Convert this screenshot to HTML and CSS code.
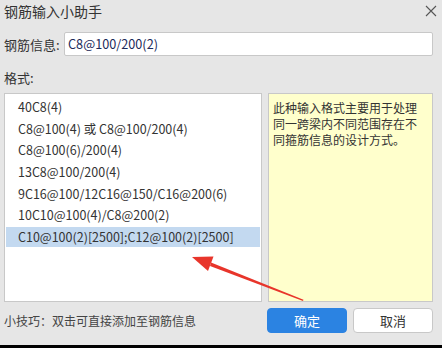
FILE: index.html
```html
<!DOCTYPE html>
<html lang="zh-CN">
<head>
<meta charset="UTF-8" />
<meta name="viewport" content="width=device-width, initial-scale=1" />
<title>钢筋输入小助手</title>
<link rel="stylesheet" href="styles.css">
</head>
<body>

<div class="dialog">
  <div class="title-bar">
    <span class="title">钢筋输入小助手</span>
    <svg class="close" width="12" height="12" viewBox="0 0 12 12">
      <path d="M1 1 L11 11 M11 1 L1 11" stroke="#555" stroke-width="1.1" fill="none" />
    </svg>
  </div>

  <div class="info-row">
    <label class="info-label">钢筋信息:</label>
    <div class="info-input">C8@100/200(2)</div>
  </div>

  <div class="format-label">格式:</div>

  <div class="main">
    <div class="format-list">
      <div class="item">40C8(4)</div>
      <div class="item">C8@100(4) 或 C8@100/200(4)</div>
      <div class="item">C8@100(6)/200(4)</div>
      <div class="item">13C8@100/200(4)</div>
      <div class="item">9C16@100/12C16@150/C16@200(6)</div>
      <div class="item">10C10@100(4)/C8@200(2)</div>
      <div class="item selected">C10@100(2)[2500];C12@100(2)[2500]</div>
    </div>
    <div class="desc">此种输入格式主要用于处理同一跨梁内不同范围存在不同箍筋信息的设计方式。</div>
  </div>

  <div class="footer">
    <div class="tip">小技巧：双击可直接添加至钢筋信息</div>
    <div class="buttons">
      <button class="btn primary">确定</button>
      <button class="btn">取消</button>
    </div>
  </div>

  <!-- 标注箭头 -->
  <svg class="arrow" width="442" height="345" viewBox="0 0 442 345">
    <polygon points="211,262.5 210,266 303,301 303.5,299.8" fill="#e8352b" />
    <polygon points="192,257 213.5,256.5 208,271" fill="#e8352b" />
  </svg>
</div>

</body>
</html>
```

FILE: styles.css
```css
* {
  box-sizing: border-box;
}
body {
  margin: 0;
  background: #000;
  font-family: "Noto Sans CJK SC", "Microsoft YaHei", sans-serif;
  color: #333;
}
.dialog {
  position: relative;
  width: 442px;
  height: 345px;
  background: #e6e6e6;
  padding: 0 9px 0 4px;
}
.title-bar {
  height: 22px;
  display: flex;
  align-items: center;
  justify-content: space-between;
}
.title {
  font-size: 14px;
  line-height: 22px;
  color: #333;
}
.close {
  margin-right: -4px;
  margin-top: -1px;
}
.info-row {
  margin-top: 10px;
  height: 24px;
  display: flex;
  align-items: center;
}
.info-label {
  width: 60px;
  font-size: 13px;
  color: #333;
}
.info-input {
  flex: 1;
  height: 24px;
  line-height: 22px;
  background: #fff;
  border: 1px solid #c8c8c8;
  border-radius: 2px;
  padding-left: 3px;
  font-size: 12.7px;
  color: #1c2a5a;
}
.format-label {
  margin-top: 14px;
  font-size: 13px;
  line-height: 16px;
  color: #333;
}
.main {
  margin-top: 7px;
  height: 209px;
  display: flex;
  gap: 6px;
}
.format-list {
  width: 258px;
  background: #fff;
  border: 1px solid #c8c8c8;
  padding: 3px 1px;
  display: flex;
  flex-direction: column;
  gap: 1.67px;
}
.item {
  height: 20px;
  line-height: 20px;
  padding-left: 12px;
  font-size: 12.5px;
  color: #333;
  white-space: nowrap;
}
.item.selected {
  background: #c3d9f0;
}
.desc {
  flex: 1;
  background: #ffffcc;
  border: 1px solid #c8c8c8;
  padding: 6px 5px 0 4px;
  font-size: 12px;
  line-height: 16px;
  color: #333;
}
.footer {
  margin-top: 6px;
  height: 25px;
  display: flex;
  align-items: center;
  justify-content: space-between;
}
.tip {
  font-size: 12px;
  color: #444;
}
.buttons {
  display: flex;
  gap: 6px;
}
.btn {
  width: 80px;
  height: 25px;
  border: 1px solid #c8c8c8;
  border-radius: 4px;
  background: #fff;
  font-family: inherit;
  font-size: 13px;
  color: #333;
  padding: 0;
}
.btn.primary {
  background: #2b83e2;
  border-color: #2b83e2;
  color: #fff;
}
.arrow {
  position: absolute;
  left: 0;
  top: 0;
  pointer-events: none;
}
```
